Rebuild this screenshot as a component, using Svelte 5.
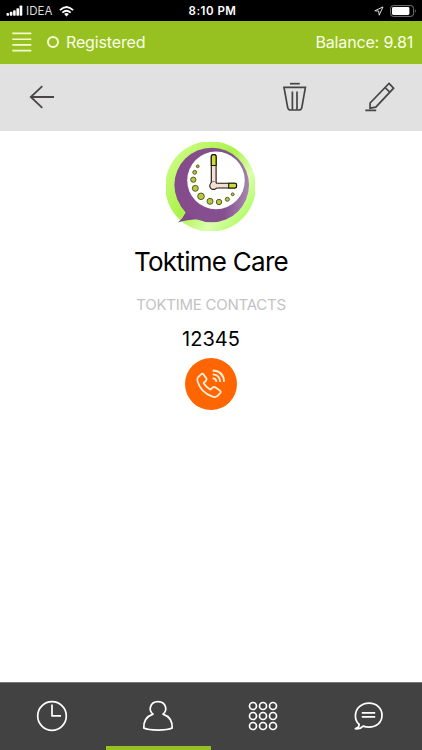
<script>
    let activeTab = $state('contacts');

    const contact = {
        name: 'Toktime Care',
        group: 'TOKTIME CONTACTS',
        number: '12345'
    };

    const tabs = ['recents', 'contacts', 'keypad', 'messages'];
    const keys = [6, 16, 26];

    // minute dots around the clock face of the avatar
    const dots = [
        [31.7, 24.3, 1.4],
        [28.7, 30.3, 1.9],
        [27.3, 37.7, 2.6],
        [29.3, 46.3, 3],
        [35, 54.3, 3.3],
        [44, 59.3, 3],
        [53, 60, 2.7],
        [61.3, 57.3, 2],
        [66.7, 52.3, 1.4]
    ];
</script>

<div class="screen">
    <div class="status">
        <div class="carrier">
            <svg width="17" height="12" viewBox="0 0 17 12" fill="#fff">
                <rect x="0.5" y="8" width="2.5" height="2.8" rx="0.7" />
                <rect x="3.8" y="6.8" width="2.6" height="4" rx="0.7" />
                <rect x="7.1" y="5.3" width="2.6" height="5.5" rx="0.7" />
                <rect x="10.4" y="3.3" width="2.6" height="7.5" rx="0.7" />
                <rect x="13.6" y="0.6" width="2.7" height="10.2" rx="0.7" />
            </svg>
            <span class="idea">IDEA</span>
            <svg class="wifi" width="15" height="11" viewBox="0 0 15 11" fill="none" stroke="#fff" stroke-width="1.8">
                <path d="M0.9 4.2Q7.5 -2.2 14.1 4.2" />
                <path d="M3.3 6.7Q7.5 2.7 11.7 6.7" />
                <path d="M5.1 8.1Q7.5 6 9.9 8.1L7.5 10.6Z" fill="#fff" stroke="none" />
            </svg>
        </div>
        <span class="time">8:10 PM</span>
        <div class="power">
            <svg width="10" height="10" viewBox="0 0 10 10" fill="none" stroke="#ddd" stroke-width="1">
                <path d="M0.8 4.8L9 0.9L5.2 9.2L4.7 5.1Z" />
            </svg>
            <svg width="27" height="12" viewBox="0 0 27 12">
                <rect x="0.6" y="0.6" width="23" height="10.8" rx="2.7" fill="none" stroke="#777" />
                <rect x="2" y="2" width="17.4" height="8" rx="1.4" fill="#fff" />
                <path d="M25 4Q26.8 6 25 8Z" fill="#777" />
            </svg>
        </div>
    </div>

    <header class="account">
        <button class="menu" aria-label="Menu">
            <svg width="20" height="20" viewBox="0 0 20 20" stroke="#f4ffd0" stroke-width="1.6">
                <path d="M0.3 1.4H19.3M0.3 7.2H19.3M0.3 12.9H19.3M0.3 18.6H19.3" />
            </svg>
        </button>
        <span class="ring"></span>
        <span class="registered">Registered</span>
        <span class="balance">Balance: 9.81</span>
    </header>

    <div class="toolbar">
        <button class="back" aria-label="Back">
            <svg width="26" height="24" viewBox="0 0 26 24" fill="none" stroke="#4a4646" stroke-width="1.8">
                <path d="M25 12H2M13.3 1.2L1.8 12L13.3 22.8" />
            </svg>
        </button>
        <button class="delete" aria-label="Delete">
            <svg width="24" height="30" viewBox="0 0 24 30" fill="none" stroke="#474444" stroke-width="1.7">
                <path d="M7 1.7H16.8" />
                <path d="M1 5.4H22.4L18.8 25.6Q18.3 28 16 28H7.5Q5.2 28 4.7 25.6Z" />
                <path d="M9.4 9.5V28M14 9.5V28" />
            </svg>
        </button>
        <button aria-label="Edit">
            <svg width="30" height="30" viewBox="0 0 30 30" fill="none" stroke="#474444" stroke-width="1.7">
                <path d="M24 1.4L28.6 6.2L10.8 25.1L5 26.2L5.1 21Z" />
                <path d="M20 5.5L24.7 10.2M0.3 28.4H11.2" />
            </svg>
        </button>
    </div>

    <main>
        <svg class="avatar" width="89" height="89" viewBox="0 0 89 89">
            <defs>
                <linearGradient id="lime" x1="0" y1="0" x2="1" y2="0.8">
                    <stop offset="0" stop-color="#93e34b" />
                    <stop offset="0.15" stop-color="#c9fb7c" />
                    <stop offset="0.5" stop-color="#aaf34a" />
                    <stop offset="0.75" stop-color="#dcffb0" />
                    <stop offset="1" stop-color="#a8fb55" />
                </linearGradient>
                <linearGradient id="plum" x1="0" y1="0.5" x2="1" y2="0.6">
                    <stop offset="0" stop-color="#854b8b" />
                    <stop offset="0.7" stop-color="#85508f" />
                    <stop offset="1" stop-color="#a887b1" />
                </linearGradient>
            </defs>
            <circle cx="44.5" cy="44.5" r="45.3" fill="url(#lime)" />
            <path d="M12 80.6Q17 76 19.7 70.4L14 63L32 72L34 77.3Q20 77.5 12 80.6Z" fill="#80478b" />
            <circle cx="45.7" cy="43" r="37.3" fill="url(#plum)" />
            <circle cx="50" cy="38.4" r="28.8" fill="#fff" />
            <g fill="#b9c83b" stroke="#4b4c1c" stroke-width="0.9">
                {#each dots as [x, y, r]}
                    <circle cx={x} cy={y} {r} />
                {/each}
            </g>
            <g fill="#f4dfd2" stroke="#17150f" stroke-width="1.1">
                <rect x="45.3" y="12.6" width="4.8" height="31" rx="2" />
                <rect x="47" y="41.2" width="23.6" height="4.8" rx="1.6" />
                <circle cx="47.5" cy="43.7" r="3.7" />
                <path d="M45.9 40H49.5V41.8H52V45.4H48Z" stroke="none" />
                <path d="M45.3 23.5V14.6Q45.3 12.6 47.7 12.6Q50.1 12.6 50.1 14.6V23.5Z" fill="#cbdc32" />
                <path d="M62.7 41.2H69Q70.6 41.2 70.6 43.6Q70.6 46 69 46H62.7Z" fill="#cbdc32" />
            </g>
        </svg>

        <h1>{contact.name}</h1>
        <p class="group">{contact.group}</p>
        <p class="number">{contact.number}</p>
        <button class="call" aria-label="Call">
            <svg width="52" height="52" viewBox="0 0 52 52" fill="none" stroke="#fff0d8" stroke-width="1.8" stroke-linejoin="round">
                <path d="M16.4 16.1L12.9 19.4Q11.8 21 12.6 23.6C14.6 30.4 20.4 36.3 27.6 38.7Q30.6 39.6 32.3 38.1L35.2 35.2Q36.4 33.8 34.8 32.5L30.2 29.3Q28.9 28.5 27.8 29.5L25.5 31.7Q20.6 28.9 18.6 25L21.1 22.6Q22.1 21.4 21.2 20.1L18.4 16.4Q17.4 15.1 16.4 16.1Z" />
                <path d="M27.7 12.5Q38.6 13 39.1 23.9M27.7 16.4Q34.8 16.8 35.2 23.9M27.7 20.2Q31.2 20.6 31.5 23.9" />
            </svg>
        </button>
    </main>

    <nav>
        {#each tabs as tab}
            <button class:active={activeTab === tab} aria-label={tab} onclick={() => (activeTab = tab)}>
                <svg width="32" height="32" viewBox="0 0 32 32" fill="none" stroke="#fff" stroke-width="1.7" stroke-linejoin="round">
                    {#if tab === 'recents'}
                        <circle cx="16" cy="16" r="14.3" />
                        <path d="M16 4.5V15.9H25" />
                    {:else if tab === 'contacts'}
                        <path d="M11 14.1C5.2 16.1 1.5 21.1 1.8 28.1C7 30.8 25 30.8 30.2 28.1C30.5 21.1 26.8 16.1 21 14.1C23.8 11.8 24.2 9.7 23.6 7.2C22.5 3 19.5 1.6 16 1.6C12.5 1.6 9.5 3 8.4 7.2C7.8 9.7 8.2 11.8 11 14.1Z" />
                    {:else if tab === 'keypad'}
                        {#each keys as y}
                            {#each keys as x}
                                <circle cx={x} cy={y} r="3.5" />
                            {/each}
                        {/each}
                    {:else}
                        <path d="M2.3 28.7C5.2 27.7 6.2 26.3 6.2 24.5C3.6 22.2 2.4 19.2 2.4 16C2.4 8.3 8.5 3.1 16 3.1C23.6 3.1 29 8.3 29 15.2C29 22.4 23.5 27.1 16 27.1Q12.8 27.1 10.2 26.1Q7.2 29.4 2.3 28.7Z" />
                        <path d="M8.8 12.9H22.2M8.8 16.8H22.2" />
                    {/if}
                </svg>
            </button>
        {/each}
    </nav>
</div>

<style>
    :global(body) {
        margin: 0;
    }

    .screen {
        display: flex;
        flex-direction: column;
        width: 422px;
        height: 750px;
        overflow: hidden;
        background: #fff;
        color: #000;
        font-family: Inter, "Liberation Sans", sans-serif;
    }

    svg {
        display: block;
        flex: none;
    }

    button {
        display: block;
        padding: 0;
        border: 0;
        background: none;
        cursor: pointer;
    }

    .status {
        display: grid;
        grid-template-columns: 1fr auto 1fr;
        align-items: center;
        box-sizing: border-box;
        height: 21px;
        padding: 1px 5px 0 6px;
        background: #000;
        color: #fff;
        line-height: 20px;
    }

    .carrier,
    .power {
        display: flex;
        align-items: center;
    }

    .idea {
        margin-left: 3px;
        color: #ddd;
        font-size: 11.5px;
        letter-spacing: 0.1px;
    }

    .wifi {
        margin-left: 6px;
    }

    .time {
        padding-left: 2px;
        font-size: 11.5px;
        font-weight: 600;
        letter-spacing: 0.5px;
    }

    .power {
        justify-content: flex-end;
        gap: 6px;
    }

    .account {
        display: flex;
        align-items: center;
        box-sizing: border-box;
        height: 43px;
        padding: 0 9px 1px 12px;
        background: #97c121;
        color: #faffe8;
        font-size: 16px;
        line-height: 42px;
    }

    .ring {
        width: 8px;
        height: 8px;
        margin: 0 7px 0 15px;
        border: 2px solid #f8ffda;
        border-radius: 50%;
    }

    .registered {
        letter-spacing: -0.15px;
    }

    .balance {
        margin-left: auto;
        letter-spacing: -0.15px;
    }

    .toolbar {
        display: flex;
        align-items: center;
        box-sizing: border-box;
        height: 67px;
        padding: 0 27px 2px 29px;
        border-top: 1px solid #e0e8cb;
        background: #e1e1e1;
    }

    .delete {
        margin: 0 58px 0 auto;
    }

    main {
        display: flex;
        flex: 1;
        flex-direction: column;
        align-items: center;
        padding-top: 11px;
    }

    .avatar {
        margin-right: 1px;
    }

    h1,
    p {
        margin: 0;
    }

    h1 {
        margin-top: 14px;
        font-size: 26px;
        font-weight: 400;
        line-height: 34px;
        letter-spacing: -0.72px;
    }

    .group {
        margin-top: 16px;
        color: #c3c3c3;
        font-size: 15px;
        line-height: 20px;
        letter-spacing: -0.25px;
    }

    .number {
        margin-top: 10px;
        font-size: 20px;
        line-height: 28px;
    }

    .call {
        width: 52px;
        height: 52px;
        margin-top: 5px;
        border-radius: 50%;
        background: #ff6500;
    }

    nav {
        display: grid;
        grid-template-columns: repeat(4, 1fr);
        height: 67px;
        border-top: 1px solid #777;
        background: #424242;
    }

    nav button {
        display: flex;
        justify-content: center;
        padding: 17px 1px 0 0;
        border-bottom: 4px solid transparent;
    }

    nav button.active {
        border-bottom-color: #97c121;
    }
</style>
